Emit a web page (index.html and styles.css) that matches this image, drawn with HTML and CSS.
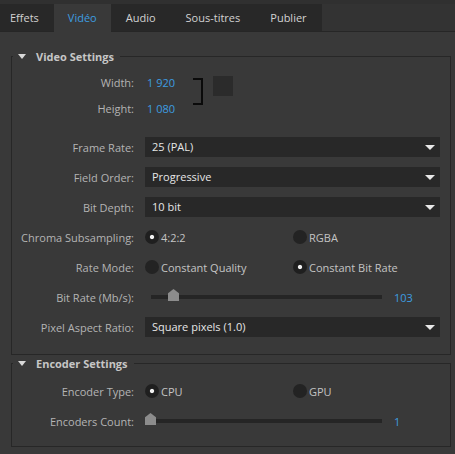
FILE: index.html
```html
<!DOCTYPE html>
<html>
  <head>
    <meta charset="UTF-8">
    <title>Export Settings</title>
    <link rel="stylesheet" href="styles.css">
  </head>
  <body>
    <div class="tabs">
      <div class="tab first">Effets</div>
      <div class="tab active">Vidéo</div>
      <div class="tab">Audio</div>
      <div class="tab">Sous-titres</div>
      <div class="tab">Publier</div>
      <div class="tab-rest"></div>
    </div>

    <div class="panel">
      <fieldset class="group video">
        <legend><span class="caret"></span>Video Settings</legend>

        <div class="dims">
          <div class="dim-rows">
            <div class="row">
              <div class="label">Width:</div>
              <div class="value">1 920</div>
            </div>
            <div class="row">
              <div class="label">Height:</div>
              <div class="value">1 080</div>
            </div>
          </div>
          <div class="bracket"></div>
          <div class="link-box"></div>
        </div>

        <div class="row">
          <div class="label">Frame Rate:</div>
          <div class="select">25 (PAL)</div>
        </div>
        <div class="row">
          <div class="label">Field Order:</div>
          <div class="select">Progressive</div>
        </div>
        <div class="row">
          <div class="label">Bit Depth:</div>
          <div class="select">10 bit</div>
        </div>
        <div class="row">
          <div class="label">Chroma Subsampling:</div>
          <div class="radios">
            <div class="radio checked">4:2:2</div>
            <div class="radio">RGBA</div>
          </div>
        </div>
        <div class="row">
          <div class="label">Rate Mode:</div>
          <div class="radios">
            <div class="radio">Constant Quality</div>
            <div class="radio checked">Constant Bit Rate</div>
          </div>
        </div>
        <div class="row">
          <div class="label">Bit Rate (Mb/s):</div>
          <div class="slider bitrate">
            <div class="track"><div class="thumb" style="left: 17px"></div></div>
          </div>
          <div class="value">103</div>
        </div>
        <div class="row">
          <div class="label">Pixel Aspect Ratio:</div>
          <div class="select">Square pixels (1.0)</div>
        </div>
      </fieldset>

      <fieldset class="group encoder">
        <legend><span class="caret"></span>Encoder Settings</legend>
        <div class="row">
          <div class="label">Encoder Type:</div>
          <div class="radios">
            <div class="radio checked">CPU</div>
            <div class="radio">GPU</div>
          </div>
        </div>
        <div class="row">
          <div class="label">Encoders Count:</div>
          <div class="slider count">
            <div class="track"><div class="thumb" style="left: 0px"></div></div>
          </div>
          <div class="value">1</div>
        </div>
      </fieldset>
    </div>
  </body>
</html>
```

FILE: styles.css
```css
body {
  margin: 0;
  background-color: #393939;
  font-family: "Open Sans", "DejaVu Sans", sans-serif;
  font-size: 11px;
  color: #b4b4b4;
}

/* tab bar */

.tabs {
  display: flex;
  padding-top: 4px;
  background-color: #303030;
}

.tab {
  height: 27px;
  line-height: 27px;
  padding: 0 15px;
  background-color: #282828;
  color: #d2d2d2;
  border-bottom: 1px solid #262626;
}

.tab.first {
  padding: 0 15px 0 10px;
}

.tab.active {
  padding: 0 14px;
  background-color: #393939;
  color: #3d9de0;
  border-bottom-color: #393939;
}

.tab-rest {
  flex: 1;
  background-color: #333333;
  border-bottom: 1px solid #262626;
}

/* groups */

.panel {
  padding: 17px 4px 0 11px;
}

.group {
  margin: 0 0 1px 0;
  padding: 8px 10px 17px 9px;
  border: 1px solid #272727;
  min-width: 0;
}

.group.encoder {
  padding-top: 10px;
  padding-bottom: 15px;
}

legend {
  padding: 0 6px 0 5px;
  margin-left: -8px;
  font-weight: bold;
  color: #c6c6c6;
}

.caret {
  display: inline-block;
  width: 0;
  height: 0;
  border-left: 4px solid transparent;
  border-right: 4px solid transparent;
  border-top: 5px solid #d8d8d8;
  margin-right: 10px;
  vertical-align: 2px;
}

/* rows */

.row {
  display: flex;
  align-items: center;
  height: 20px;
  margin-bottom: 10px;
}

.row:last-child {
  margin-bottom: 0;
}

.label {
  width: 113px;
  flex-shrink: 0;
  text-align: right;
  margin-right: 11px;
}

.value {
  color: #3d9de0;
  margin-left: 2px;
}

.dims {
  display: flex;
  align-items: flex-start;
  margin-bottom: 19px;
}

.dim-rows .row {
  margin-bottom: 6px;
}

.dim-rows .row:last-child {
  margin-bottom: 0;
}

.dim-rows .value {
  width: 46px;
}

.bracket {
  width: 8px;
  height: 23px;
  margin-top: 6px;
  border: 2px solid #0a0a0a;
  border-left: none;
}

.link-box {
  width: 20px;
  height: 20px;
  margin: 4px 0 0 10px;
  background-color: #2b2b2b;
}

/* dropdowns */

.select {
  flex: 1;
  height: 20px;
  line-height: 20px;
  padding-left: 7px;
  background-color: #282828;
  color: #e6e6e6;
  position: relative;
}

.select::after {
  content: "";
  position: absolute;
  right: 5px;
  top: 8px;
  border-left: 5px solid transparent;
  border-right: 5px solid transparent;
  border-top: 5px solid #e8e8e8;
}

/* radios */

.radios {
  display: flex;
}

.radio {
  width: 148px;
  display: flex;
  align-items: center;
  color: #c4c4c4;
}

.radio::before {
  content: "";
  width: 14px;
  height: 14px;
  border-radius: 50%;
  background-color: #232323;
  margin-right: 2px;
  flex-shrink: 0;
}

.radio.checked::before {
  background: radial-gradient(circle, #f0f0f0 0 1.6px, #1f1f1f 2.6px);
}

/* sliders */

.slider {
  width: 237px;
  flex-shrink: 0;
  margin-right: 10px;
}

.slider.bitrate {
  padding-left: 6px;
  width: 231px;
}

.track {
  height: 4px;
  background-color: #252525;
  position: relative;
}

.thumb {
  position: absolute;
  top: -6px;
  width: 11px;
  height: 12px;
  background-color: #8c8c8c;
  clip-path: polygon(0 35%, 50% 0, 100% 35%, 100% 100%, 0 100%);
}
```
